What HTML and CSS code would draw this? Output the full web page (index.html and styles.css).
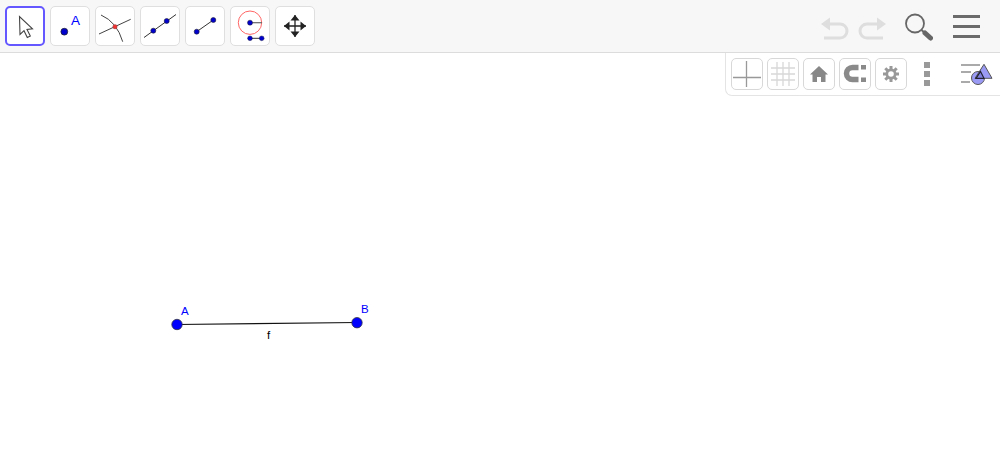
FILE: index.html
```html
<!DOCTYPE html>
<html lang="en">
<head>
    <meta charset="UTF-8">
    <title>Geometry</title>
    <link rel="stylesheet" href="styles.css">
</head>
<body>
    <div class="app">
        <header class="toolbar">
            <div class="tools">
                <button class="tool selected">
                    <svg width="36" height="36" viewBox="0 0 36 36"><path d="M12.500 8.500 13 26.500l4-3.800 3.300 6.800 3-1.400-3.300-6.700 5.500-.5z" fill="#fff" stroke="#444" stroke-width="1.100"/></svg>
                </button>
                <button class="tool">
                    <svg width="38" height="38" viewBox="0 0 38 38"><circle cx="13.300" cy="24.700" r="3.400" fill="#00c" stroke="#223" stroke-width=".8"/><text x="20" y="18" class="tool-label">A</text></svg>
                </button>
                <button class="tool">
                    <svg width="38" height="38" viewBox="0 0 38 38"><path d="M3 27 34.700 12.300M5 8Q21 15 26.700 34.700" fill="none" stroke="#444" stroke-width="1"/><circle cx="19" cy="19.700" r="2.200" fill="#e33" stroke="#844" stroke-width=".4"/></svg>
                </button>
                <button class="tool">
                    <svg width="38" height="38" viewBox="0 0 38 38"><path d="M3 30.500 35 7.500" stroke="#333" stroke-width="1"/><circle cx="12.300" cy="23.700" r="2.500" fill="#00c" stroke="#223" stroke-width=".6"/><circle cx="25.700" cy="14" r="2.500" fill="#00c" stroke="#223" stroke-width=".6"/></svg>
                </button>
                <button class="tool">
                    <svg width="38" height="38" viewBox="0 0 38 38"><path d="M10.700 24.700 27.300 13" stroke="#333" stroke-width="1"/><circle cx="10.700" cy="24.700" r="2.500" fill="#00c" stroke="#223" stroke-width=".6"/><circle cx="27.300" cy="13" r="2.500" fill="#00c" stroke="#223" stroke-width=".6"/></svg>
                </button>
                <button class="tool">
                    <svg width="38" height="38" viewBox="0 0 38 38"><circle cx="19" cy="15.700" r="11.700" fill="none" stroke="#f66" stroke-width="1"/><path d="M19 15.700H31" stroke="#666" stroke-width="1.200"/><path d="M19 31.300H31" stroke="#333" stroke-width="1"/><circle cx="19" cy="15.700" r="2.500" fill="#00c" stroke="#223" stroke-width=".5"/><circle cx="19" cy="31.300" r="2.400" fill="#00c" stroke="#223" stroke-width=".4"/><circle cx="30.700" cy="31.300" r="2.400" fill="#00c" stroke="#223" stroke-width=".4"/></svg>
                </button>
                <button class="tool">
                    <svg width="38" height="38" viewBox="0 0 38 38"><path d="M19 8v22M8 19h22" stroke="#222" stroke-width="1.300"/><path d="M19 8l-4.500 5.500h9zM19 30l-4.500-5.500h9zM8 19l5.500-4.500v9zM30 19l-5.500-4.500v9z" fill="#222"/></svg>
                </button>
            </div>
            <div class="actions">
                <svg class="undo" width="30" height="26" viewBox="0 0 30 26"><path d="M1 9 10 2.500V15.500z" fill="#dedede"/><path d="M9 9H20a7 7 0 0 1 0 14H4" fill="none" stroke="#dedede" stroke-width="3"/></svg>
                <svg class="redo" width="30" height="26" viewBox="0 0 30 26"><path d="M29 9 20 2.500V15.500z" fill="#dedede"/><path d="M21 9H10a7 7 0 0 0 0 14H26" fill="none" stroke="#dedede" stroke-width="3"/></svg>
                <svg class="search" width="30" height="30" viewBox="0 0 30 30"><circle cx="12" cy="11.500" r="9" fill="none" stroke="#666" stroke-width="1.800"/><path d="M18.500 18 22 21" stroke="#666" stroke-width="2"/><path d="M22 21 27.500 26" stroke="#666" stroke-width="5" stroke-linecap="round"/></svg>
                <div class="menu"><span></span><span></span><span></span></div>
            </div>
        </header>
        <main class="canvas">
            <svg class="drawing" width="1000" height="397" viewBox="0 53 1000 397">
                <path d="M177 324.500 357 322.500" stroke="#111" stroke-width="1.100"/>
                <circle cx="177" cy="324.500" r="5.200" fill="#00f" stroke="#334" stroke-width=".8"/>
                <circle cx="357" cy="322.700" r="5.200" fill="#00f" stroke="#334" stroke-width=".8"/>
                <text x="181" y="315" class="point-label">A</text>
                <text x="361" y="313" class="point-label">B</text>
                <text x="267" y="339" class="line-label">f</text>
            </svg>
            <div class="stylebar">
                <button class="style-btn">
                    <svg width="30" height="30" viewBox="0 0 30 30"><path d="M14.500 2V28M1 18.500H29" stroke="#999" stroke-width="1.300"/></svg>
                </button>
                <button class="style-btn">
                    <svg width="30" height="30" viewBox="0 0 30 30"><path d="M9 3V27M15 3V27M21 3V27M3 9H27M3 15H27M3 21H27" stroke="#d8d8d8" stroke-width="1.300"/></svg>
                </button>
                <button class="style-btn">
                    <svg width="30" height="30" viewBox="0 0 30 30"><path d="M15 7 6 15.500H8.500V23H13V18H17V23H21.500V15.500H24z" fill="#888"/></svg>
                </button>
                <button class="style-btn">
                    <svg width="30" height="30" viewBox="0 0 30 30"><path d="M18.500 8.500H12.500a6 6 0 0 0 0 12H18.500" fill="none" stroke="#8a8a8a" stroke-width="5.500"/><path d="M21 6h5v4.500h-5zM21 18.500h5V23h-5z" fill="#8a8a8a"/></svg>
                </button>
                <button class="style-btn">
                    <svg width="30" height="30" viewBox="0 0 30 30"><path d="M15 7V23M7 15H23M9.300 9.300 20.700 20.700M20.700 9.300 9.300 20.700" stroke="#999" stroke-width="3"/><circle cx="15" cy="15" r="5.500" fill="#999"/><circle cx="15" cy="15" r="2.800" fill="#fff"/></svg>
                </button>
                <div class="dots"><span></span><span></span><span></span></div>
                <svg class="toggle" width="34" height="28" viewBox="0 0 34 28"><path d="M1 7H20M1 14H11M1 24H10" stroke="#aaa" stroke-width="2"/><circle cx="18" cy="20" r="6.500" fill="#9a9af5" stroke="#555"/><path d="M24 6.300 32 20.300H15z" fill="#9a9af5" stroke="#555"/><path d="M16 20.300 20.500 13.500 24 20.300z" fill="#8080e0" stroke="#223" stroke-width="1.200"/></svg>
            </div>
        </main>
    </div>
</body>
</html>
```

FILE: styles.css
```css
* { padding: 0; margin: 0; box-sizing: border-box; }
body {
    background: #fff;
    font-family: "Liberation Sans", Arial, sans-serif;
    overflow: hidden;
}
.app {
    width: 1000px;
    height: 450px;
    display: flex;
    flex-direction: column;
}
.toolbar {
    height: 53px;
    flex: none;
    background: #f7f7f7;
    border-bottom: 1px solid #dcdcdc;
    display: flex;
    justify-content: space-between;
    padding: 6px 20px 0 5px;
}
.tools {
    display: flex;
    gap: 5px;
}
button {
    background: #fff;
    border: 1px solid #dfdfdf;
    border-radius: 5px;
    display: flex;
    align-items: center;
    justify-content: center;
}
.tool {
    width: 40px;
    height: 40px;
}
.tool.selected {
    border: 2px solid #6557ff;
}
.tool-label {
    font-size: 13.500px;
    fill: #00f;
}
.actions {
    display: flex;
    align-items: flex-start;
}
.undo {
    margin: 9px 7px 0 0;
}
.redo {
    margin: 9px 16px 0 0;
}
.search {
    margin: 6px 20px 0 0;
}
.menu {
    width: 27px;
    margin-top: 9px;
    display: flex;
    flex-direction: column;
    gap: 7px;
}
.menu span {
    height: 3px;
    background: #6b6b6b;
}
.canvas {
    flex: 1;
    position: relative;
}
.drawing {
    display: block;
}
.point-label {
    font-size: 11.500px;
    fill: #00f;
}
.line-label {
    font-size: 11.500px;
    fill: #000;
}
.stylebar {
    position: absolute;
    top: 0;
    right: 0;
    width: 275px;
    height: 43px;
    background: #fff;
    border-left: 1px solid #e4e4e4;
    border-bottom: 1px solid #e4e4e4;
    border-bottom-left-radius: 7px;
    display: flex;
    gap: 4px;
    padding: 5px 0 0 5px;
}
.style-btn {
    width: 32px;
    height: 32px;
    border-color: #d8d8d8;
}
.dots {
    display: flex;
    flex-direction: column;
    gap: 3px;
    margin: 4px 0 0 13px;
}
.dots span {
    width: 6px;
    height: 6px;
    background: #999;
}
.toggle {
    margin-left: 26px;
}
```
